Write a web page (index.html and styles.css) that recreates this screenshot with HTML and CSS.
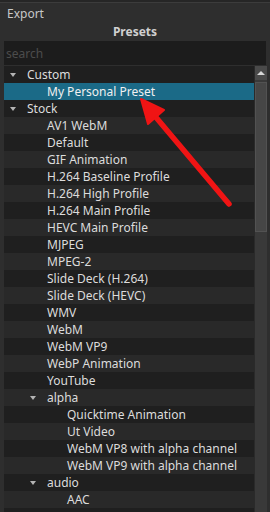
FILE: index.html
```
<!DOCTYPE html>
<html lang="en">
<head>
    <meta charset="UTF-8">
    <meta name="viewport" content="width=device-width, initial-scale=1.0">
    <title>Export</title>
    <link rel="stylesheet" href="styles.css">
</head>
<body>
    <div class="dock-title">Export</div>
    <div class="heading">Presets</div>

    <div class="search-box">
        <input type="text" class="search" placeholder="search">
    </div>

    <div class="tree">
        <div class="rows">
            <div class="row branch"><span class="toggle"><span class="tri"></span></span>Custom</div>
            <div class="row selected"><span class="indent1"></span><span class="toggle"></span>My Personal Preset</div>
            <div class="row branch"><span class="toggle"><span class="tri"></span></span>Stock</div>
            <div class="row"><span class="indent1"></span><span class="toggle"></span>AV1 WebM</div>
            <div class="row"><span class="indent1"></span><span class="toggle"></span>Default</div>
            <div class="row"><span class="indent1"></span><span class="toggle"></span>GIF Animation</div>
            <div class="row"><span class="indent1"></span><span class="toggle"></span>H.264 Baseline Profile</div>
            <div class="row"><span class="indent1"></span><span class="toggle"></span>H.264 High Profile</div>
            <div class="row"><span class="indent1"></span><span class="toggle"></span>H.264 Main Profile</div>
            <div class="row"><span class="indent1"></span><span class="toggle"></span>HEVC Main Profile</div>
            <div class="row"><span class="indent1"></span><span class="toggle"></span>MJPEG</div>
            <div class="row"><span class="indent1"></span><span class="toggle"></span>MPEG-2</div>
            <div class="row"><span class="indent1"></span><span class="toggle"></span>Slide Deck (H.264)</div>
            <div class="row"><span class="indent1"></span><span class="toggle"></span>Slide Deck (HEVC)</div>
            <div class="row"><span class="indent1"></span><span class="toggle"></span>WMV</div>
            <div class="row"><span class="indent1"></span><span class="toggle"></span>WebM</div>
            <div class="row"><span class="indent1"></span><span class="toggle"></span>WebM VP9</div>
            <div class="row"><span class="indent1"></span><span class="toggle"></span>WebP Animation</div>
            <div class="row"><span class="indent1"></span><span class="toggle"></span>YouTube</div>
            <div class="row branch"><span class="indent1"></span><span class="toggle"><span class="tri"></span></span>alpha</div>
            <div class="row"><span class="indent2"></span><span class="toggle"></span>Quicktime Animation</div>
            <div class="row"><span class="indent2"></span><span class="toggle"></span>Ut Video</div>
            <div class="row"><span class="indent2"></span><span class="toggle"></span>WebM VP8 with alpha channel</div>
            <div class="row"><span class="indent2"></span><span class="toggle"></span>WebM VP9 with alpha channel</div>
            <div class="row branch"><span class="indent1"></span><span class="toggle"><span class="tri"></span></span>audio</div>
            <div class="row"><span class="indent2"></span><span class="toggle"></span>AAC</div>
            <div class="row"></div>
        </div>
        <div class="scrollbar">
            <div class="scroll-up"><span class="up-tri"></span></div>
            <div class="scroll-thumb"></div>
        </div>
    </div>

    <svg class="pointer" width="270" height="512" viewBox="0 0 270 512">
        <line x1="154" y1="115" x2="229" y2="204" stroke="#f01414" stroke-width="5.5" stroke-linecap="round"/>
        <polygon points="141,99 164,110 148,124" fill="#f01414" stroke="#f01414" stroke-width="2" stroke-linejoin="round"/>
    </svg>
</body>
</html>
```

FILE: styles.css
```
html, body {
    margin: 0;
    height: 512px;
    overflow: hidden;
}
body {
    position: relative;
    background-color: #2e2e2e;
    border-top: 2px solid #262626;
    box-sizing: border-box;
    font-family: "Noto Sans", "DejaVu Sans", sans-serif;
    font-size: 12px;
    color: #dcdcdc;
}
.dock-title {
    height: 21px;
    line-height: 21px;
    padding-left: 7px;
    color: #c8c8c8;
    border-top: 1px solid #3c3c3c;
}
.heading {
    height: 17px;
    line-height: 16px;
    text-align: center;
    font-weight: bold;
    color: #d0d0d0;
}
.search-box {
    margin: 0 4px;
    height: 24px;
    background-color: #1c1c1c;
}
.search {
    width: 100%;
    height: 24px;
    box-sizing: border-box;
    border: none;
    outline: none;
    background: transparent;
    padding: 0 2px;
    font-family: "Noto Sans", "DejaVu Sans", sans-serif;
    font-size: 12px;
    color: #dcdcdc;
}
.search::placeholder {
    color: #4c4c4c;
}
.tree {
    margin: 1px 3px 0 4px;
    display: flex;
}
.rows {
    flex: 1;
}
.row {
    height: 17px;
    line-height: 17px;
    display: flex;
    align-items: center;
    white-space: nowrap;
    background-color: #1f1f1f;
}
.row:nth-child(even) {
    background-color: #292929;
}
.row.selected {
    background-color: #1b6a87;
    color: #f0f0f0;
}
.indent1 {
    width: 20px;
    flex: none;
}
.indent2 {
    width: 40px;
    flex: none;
}
.toggle {
    width: 23px;
    height: 17px;
    flex: none;
    display: flex;
    align-items: center;
    padding-left: 6px;
    box-sizing: border-box;
}
.tri {
    width: 0;
    height: 0;
    border-left: 3px solid transparent;
    border-right: 3px solid transparent;
    border-top: 4px solid #b4b4b4;
    margin-top: 1px;
}
.scrollbar {
    width: 13px;
    flex: none;
    background-color: #393939;
    border-left: 1px solid #2a2a2a;
    box-sizing: border-box;
}
.scroll-up {
    height: 14px;
    background-color: #4a4a4a;
    display: flex;
    align-items: center;
    justify-content: center;
}
.up-tri {
    width: 0;
    height: 0;
    border-left: 4px solid transparent;
    border-right: 4px solid transparent;
    border-bottom: 4px solid #d8d8d8;
}
.scroll-thumb {
    margin-top: 2px;
    height: 150px;
    background-color: #464646;
    border: 1px solid #525252;
    box-sizing: border-box;
}
.pointer {
    position: absolute;
    left: 0;
    top: -2px;
    pointer-events: none;
}
```
